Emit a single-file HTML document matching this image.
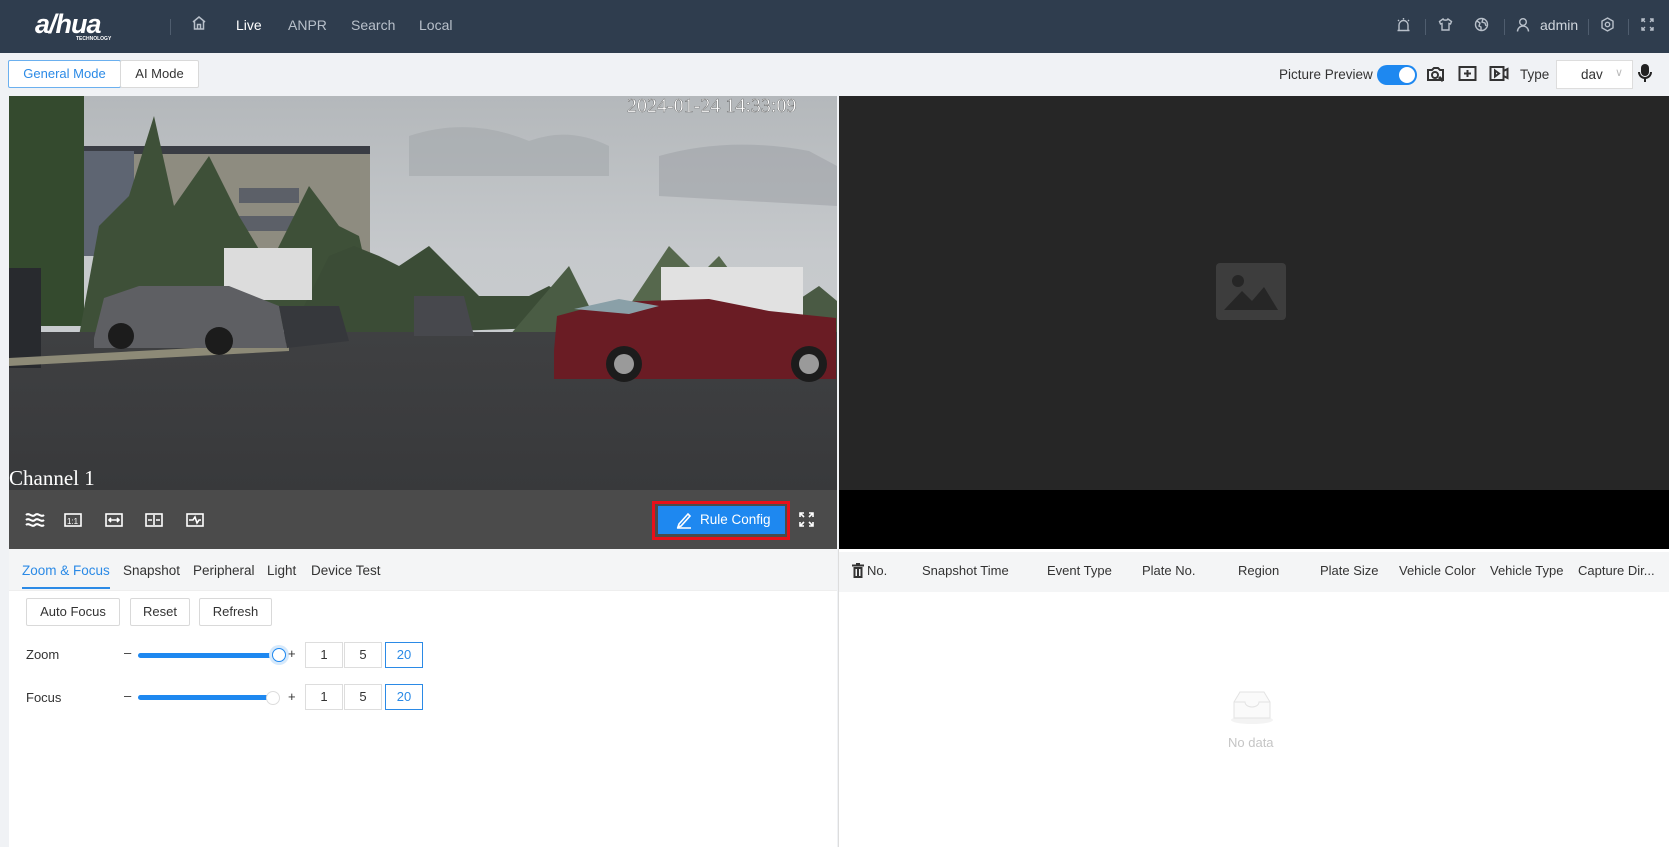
<!DOCTYPE html>
<html><head><meta charset="utf-8"><style>
*{box-sizing:border-box;margin:0;padding:0}
body{width:1669px;height:847px;overflow:hidden;background:#f0f2f5;font-family:"Liberation Sans",sans-serif;font-size:13px;color:#333;position:relative}
.a{position:absolute}
.hdr{left:0;top:0;width:1669px;height:53px;background:#2f3d4e}
.nav{color:#b8c0ca;font-size:14px;top:17px}
.sep{width:1px;height:16px;background:#4f5d6e;top:19px}
.btn{background:#fff;border:1px solid #d9d9d9;border-radius:2px;text-align:center;font-size:13px;color:#333}
.tab{font-size:13.5px;top:563px;color:#333}
.box{width:38px;height:26px;border:1px solid #ddd;background:#fff;text-align:center;line-height:24px;font-size:13px}
.th{top:563px;font-size:13px;color:#333;text-align:center}
</style></head><body>
<div class="a hdr"></div>
<div class="a" style="left:35px;top:9px;color:#fff;font:italic bold 27px 'Liberation Sans',sans-serif;letter-spacing:-1px">a/hua</div>
<div class="a" style="left:76px;top:36px;color:#fff;font-size:5px;font-weight:bold">TECHNOLOGY</div>
<div class="a sep" style="left:170px"></div>
<svg class="a" style="left:191px;top:15px" width="16" height="16" viewBox="0 0 16 16" fill="none" stroke="#b8c0ca" stroke-width="1.5"><path d="M2 7L8 2L14 7M3.5 6V14H12.5V6M6.5 14V9.5H9.5V14"/></svg>
<div class="a nav" style="left:236px;color:#fff">Live</div>
<div class="a nav" style="left:288px">ANPR</div>
<div class="a nav" style="left:351px">Search</div>
<div class="a nav" style="left:419px">Local</div>
<svg class="a" style="left:1396px;top:17px" width="15" height="15" viewBox="0 0 15 15" fill="none" stroke="#b8c0ca" stroke-width="1.4"><path d="M3 13V8a4.5 4.5 0 0 1 9 0v5M1.5 13.5h12M7.5 1v1.5M2 3l1 1M13 3l-1 1"/></svg>
<div class="a sep" style="left:1425px"></div>
<svg class="a" style="left:1438px;top:17px" width="15" height="15" viewBox="0 0 15 15" fill="none" stroke="#b8c0ca" stroke-width="1.4"><path d="M5 2L1.5 4.5l1 2.5 1.5-.5V13h7V6.5l1.5.5 1-2.5L10 2c-.5 1.5-4.5 1.5-5 0z"/></svg>
<svg class="a" style="left:1474px;top:17px" width="15" height="15" viewBox="0 0 15 15" fill="none" stroke="#b8c0ca" stroke-width="1.4"><circle cx="7.5" cy="7.5" r="6"/><path d="M3 4l3 2-1 3 2 1v3M9 2l-1 3 3 1 1 3"/></svg>
<div class="a sep" style="left:1504px"></div>
<svg class="a" style="left:1516px;top:17px" width="14" height="15" viewBox="0 0 14 15" fill="none" stroke="#b8c0ca" stroke-width="1.4"><circle cx="7" cy="5" r="3.3"/><path d="M1.5 14.5a5.5 5.5 0 0 1 11 0"/></svg>
<div class="a nav" style="left:1540px;color:#d0d6dd">admin</div>
<div class="a sep" style="left:1588px"></div>
<svg class="a" style="left:1600px;top:17px" width="15" height="15" viewBox="0 0 15 15" fill="none" stroke="#b8c0ca" stroke-width="1.4"><path d="M7.5 1l5.5 3.2v6.6L7.5 14 2 10.8V4.2z"/><circle cx="7.5" cy="7.5" r="2.2"/></svg>
<div class="a sep" style="left:1628px"></div>
<svg class="a" style="left:1641px;top:18px" width="13" height="13" viewBox="0 0 13 13" fill="none" stroke="#b8c0ca" stroke-width="1.4"><path d="M1 4V1h3M9 1h3v3M12 9v3H9M4 12H1V9M1 1l3 3M12 1L9 4M12 12L9 9M1 12l3-3"/></svg>

<div class="a btn" style="left:8px;top:60px;width:113px;height:28px;line-height:26px;color:#2b8ae6;border-color:#6bb0ef">General Mode</div>
<div class="a btn" style="left:120px;top:60px;width:79px;height:28px;line-height:26px">AI Mode</div>
<div class="a" style="left:1279px;top:67px;font-size:13.5px">Picture Preview</div>
<div class="a" style="left:1377px;top:65px;width:40px;height:20px;border-radius:10px;background:#1e88f0"><div class="a" style="right:2px;top:2px;width:16px;height:16px;border-radius:8px;background:#fff"></div></div>
<svg class="a" style="left:1426px;top:64px" width="20" height="20" viewBox="0 0 20 20" fill="none" stroke="#333" stroke-width="2"><path d="M2 6h4l2-2h4l2 2h3v10H2z"/><circle cx="9" cy="11" r="3"/><path d="M13 13l4 4" stroke-width="3"/></svg>
<svg class="a" style="left:1458px;top:65px" width="19" height="17" viewBox="0 0 19 17" fill="none" stroke="#333" stroke-width="2"><rect x="1.5" y="2" width="16" height="13"/><path d="M9.5 5v7M6 8.5h7"/></svg>
<svg class="a" style="left:1489px;top:65px" width="20" height="17" viewBox="0 0 20 17" fill="none" stroke="#333" stroke-width="2"><rect x="1.5" y="2" width="13" height="13"/><path d="M14.5 6l4-2v9l-4-2M6 5.5l4 3-4 3z"/></svg>
<div class="a" style="left:1520px;top:67px;font-size:13.5px">Type</div>
<div class="a" style="left:1556px;top:60px;width:77px;height:29px;background:#fff;border:1px solid #ddd"><span class="a" style="left:24px;top:6px;font-size:13.5px">dav</span><span class="a" style="left:58px;top:5px;color:#bbb;font-size:11px">&#8744;</span></div>
<svg class="a" style="left:1638px;top:63px" width="14" height="20" viewBox="0 0 14 20" fill="#222"><rect x="3" y="1" width="8" height="12" rx="4"/><path d="M1 9a6 6 0 0 0 12 0" fill="none" stroke="#222" stroke-width="2"/><rect x="6" y="15" width="2" height="4"/></svg>

<!-- video -->
<svg class="a" style="left:9px;top:96px" width="828" height="394" viewBox="0 0 828 394">
<defs><linearGradient id="sk" x1="0" y1="0" x2="0" y2="1"><stop offset="0" stop-color="#b4b8bb"/><stop offset=".4" stop-color="#c6c9cc"/><stop offset="1" stop-color="#cdd0d2"/></linearGradient>
<linearGradient id="rd" x1="0" y1="0" x2="0" y2="1"><stop offset="0" stop-color="#3f4042"/><stop offset="1" stop-color="#38393b"/></linearGradient></defs>
<rect width="828" height="394" fill="url(#sk)"/>
<path d="M400 40 Q460 20 520 45 Q560 30 600 50 L600 80 L400 80Z" fill="#a4a8ac" opacity=".6"/>
<path d="M650 60 Q720 40 800 55 L828 70 L828 110 L650 100Z" fill="#a0a4a8" opacity=".6"/>
<rect x="55" y="50" width="306" height="110" fill="#8e8c80"/>
<rect x="55" y="50" width="306" height="8" fill="#3a3d44"/>
<rect x="55" y="55" width="70" height="105" fill="#5e6572"/>
<rect x="230" y="92" width="60" height="15" fill="#5c6068"/>
<rect x="230" y="120" width="60" height="15" fill="#5c6068"/>
<rect x="0" y="0" width="75" height="230" fill="#344a2e"/>
<path d="M70 240 L90 130 L120 100 L145 20 L165 110 L200 60 L230 120 L260 170 L300 90 L330 130 L350 140 L370 230Z" fill="#3e5038"/>
<path d="M280 240 L320 160 L345 150 L370 160 L390 170 L420 150 L440 170 L470 200 L520 200 L540 190 L600 230 Z" fill="#3b4c36"/>
<path d="M500 240 L560 170 L600 250Z" fill="#4a5c44"/>
<path d="M760 240 L780 210 L810 190 L828 205 L828 240Z" fill="#4a5a44"/>
<path d="M600 240 L640 180 L660 150 L690 180 L710 160 L740 200 L760 240Z" fill="#56684d"/>
<rect x="0" y="236" width="828" height="158" fill="url(#rd)"/>
<rect x="0" y="172" width="32" height="100" fill="#282a2e"/>
<path d="M0 262 L280 247 L280 255 L0 270Z" fill="#8d8a77"/>
<rect x="215" y="152" width="88" height="52" fill="#dcdcdc"/>
<rect x="652" y="171" width="142" height="58" fill="#e1e1e1"/>
<path d="M85 242 L95 202 L130 190 L220 190 L270 210 L278 252 L85 252Z" fill="#5e5f63"/>
<path d="M270 210 L330 210 L340 245 L278 252Z" fill="#36383c"/>
<path d="M405 200 L455 200 L465 240 L405 240Z" fill="#47484d"/>
<path d="M545 255 L548 220 L600 206 L700 203 L760 215 L827 222 L827 283 L545 283Z" fill="#6a1c24"/>
<path d="M565 213 L610 203 L650 210 L620 218Z" fill="#8aa0a8"/>
<circle cx="615" cy="268" r="18" fill="#1c1c1c"/><circle cx="615" cy="268" r="10" fill="#9a9a9a"/>
<circle cx="800" cy="268" r="18" fill="#1c1c1c"/><circle cx="800" cy="268" r="10" fill="#9a9a9a"/>
<circle cx="112" cy="240" r="13" fill="#1c1c1c"/><circle cx="210" cy="245" r="14" fill="#1c1c1c"/>
<text x="618" y="16" fill="#fff" stroke="#333" stroke-width=".3" font-family="Liberation Serif" font-size="20">2024-01-24 14:33:09</text>
<text x="0" y="389" fill="#fff" font-family="Liberation Serif" font-size="21">Channel 1</text>
</svg>
<div class="a" style="left:9px;top:490px;width:828px;height:59px;background:#4b4b4b"></div>
<svg class="a" style="left:25px;top:510px" width="190" height="20" viewBox="0 0 190 20" fill="none" stroke="#fff" stroke-width="1.6">
<path d="M1 5c3-3 6 3 9 0s6 3 9 0M1 10c3-3 6 3 9 0s6 3 9 0M1 15c3-3 6 3 9 0s6 3 9 0" stroke-width="2"/>
<rect x="40" y="4" width="16" height="12"/><text x="42" y="14" fill="#fff" stroke="none" font-size="8">1:1</text>
<rect x="81" y="4" width="16" height="12"/><path d="M84 10h10M86 8l-2 2 2 2M92 8l2 2-2 2"/>
<rect x="121" y="4" width="16" height="12"/><path d="M129 5v10M123 10h4M131 10h4"/>
<rect x="162" y="4" width="16" height="12"/><path d="M164 10h4l2-3 2 6 2-3h2"/>
</svg>
<div class="a" style="left:652px;top:501px;width:138px;height:39px;border:3px solid #e8101a"></div>
<div class="a" style="left:658px;top:506px;width:127px;height:28px;background:#1e88f0;color:#fff;font-size:13.5px;line-height:28px;padding-left:42px">Rule Config</div>
<svg class="a" style="left:675px;top:511px" width="18" height="18" viewBox="0 0 18 18" fill="none" stroke="#fff" stroke-width="1.6"><path d="M4 13L13 3l2 2-9 10-3 1zM2 17h14"/></svg>
<svg class="a" style="left:799px;top:512px" width="15" height="15" viewBox="0 0 15 15" fill="none" stroke="#fff" stroke-width="1.6"><path d="M1 5V1h4M10 1h4v4M14 10v4h-4M5 14H1v-4M1 1l4 4M14 1l-4 4M14 14l-4-4M1 14l4-4"/></svg>

<div class="a" style="left:839px;top:96px;width:830px;height:394px;background:#262626"></div>
<svg class="a" style="left:1216px;top:263px" width="70" height="57" viewBox="0 0 70 57"><rect width="70" height="57" rx="4" fill="#3d3d3d"/><circle cx="22" cy="18" r="6" fill="#262626"/><path d="M8 47L26 28L36 38L48 24L62 47Z" fill="#262626"/></svg>
<div class="a" style="left:839px;top:490px;width:830px;height:59px;background:#000"></div>

<!-- bottom left -->
<div class="a" style="left:9px;top:549px;width:828px;height:298px;background:#fff"></div>
<div class="a" style="left:9px;top:549px;width:828px;height:42px;background:#f4f5f6;border-bottom:1px solid #eee"></div>
<div class="a tab" style="left:22px;color:#2b8ae6">Zoom &amp; Focus</div>
<div class="a" style="left:22px;top:587px;width:88px;height:2px;background:#2b8ae6"></div>
<div class="a tab" style="left:123px">Snapshot</div>
<div class="a tab" style="left:193px">Peripheral</div>
<div class="a tab" style="left:267px">Light</div>
<div class="a tab" style="left:311px">Device Test</div>
<div class="a btn" style="left:26px;top:598px;width:94px;height:28px;line-height:26px">Auto Focus</div>
<div class="a btn" style="left:130px;top:598px;width:60px;height:28px;line-height:26px">Reset</div>
<div class="a btn" style="left:199px;top:598px;width:73px;height:28px;line-height:26px">Refresh</div>
<div class="a" style="left:26px;top:647px">Zoom</div>
<div class="a" style="left:124px;top:645px">–</div>
<div class="a" style="left:138px;top:653px;width:141px;height:5px;border-radius:3px;background:#1e88f0"></div>
<div class="a" style="left:272px;top:648px;width:14px;height:14px;border-radius:7px;background:#fff;border:1.5px solid #1e88f0;box-shadow:0 0 0 3px #d6e9fb"></div>
<div class="a" style="left:288px;top:646px">+</div>
<div class="a box" style="left:305px;top:642px">1</div><div class="a box" style="left:344px;top:642px">5</div><div class="a box" style="left:385px;top:642px;border-color:#2b8ae6;color:#2b8ae6">20</div>
<div class="a" style="left:26px;top:690px">Focus</div>
<div class="a" style="left:124px;top:688px">–</div>
<div class="a" style="left:138px;top:695px;width:141px;height:5px;border-radius:3px;background:#1e88f0"></div>
<div class="a" style="left:266px;top:691px;width:14px;height:14px;border-radius:7px;background:#fff;border:1px solid #ddd"></div>
<div class="a" style="left:288px;top:689px">+</div>
<div class="a box" style="left:305px;top:684px">1</div><div class="a box" style="left:344px;top:684px">5</div><div class="a box" style="left:385px;top:684px;border-color:#2b8ae6;color:#2b8ae6">20</div>

<!-- bottom right -->
<div class="a" style="left:838px;top:549px;width:831px;height:298px;background:#fff;border-left:1px solid #ddd"></div>
<div class="a" style="left:839px;top:552px;width:830px;height:40px;background:#f4f5f6"></div>
<svg class="a" style="left:852px;top:563px" width="12" height="15" viewBox="0 0 12 15" fill="#333"><rect x="0" y="1.5" width="12" height="2"/><rect x="4" y="0" width="4" height="2"/><path d="M1.5 4h9v11h-9z M3.5 6v7h1.5V6z M7 6v7h1.5V6z" fill-rule="evenodd"/></svg>
<div class="a th" style="left:867px">No.</div>
<div class="a th" style="left:922px">Snapshot Time</div>
<div class="a th" style="left:1047px">Event Type</div>
<div class="a th" style="left:1142px">Plate No.</div>
<div class="a th" style="left:1238px">Region</div>
<div class="a th" style="left:1320px">Plate Size</div>
<div class="a th" style="left:1399px">Vehicle Color</div>
<div class="a th" style="left:1490px">Vehicle Type</div>
<div class="a th" style="left:1578px">Capture Dir...</div>
<svg class="a" style="left:1230px;top:690px" width="44" height="34" viewBox="0 0 44 34"><ellipse cx="22" cy="30" rx="21" ry="4" fill="#f3f3f3"/><path d="M4 12L10 2h24l6 10v16H4z" fill="#fafafa" stroke="#e3e3e3"/><path d="M4 12h11a7 5 0 0 0 14 0h11" fill="none" stroke="#e3e3e3"/></svg>
<div class="a" style="left:1228px;top:735px;color:#c5c5c5;font-size:13px">No data</div>
</body></html>
